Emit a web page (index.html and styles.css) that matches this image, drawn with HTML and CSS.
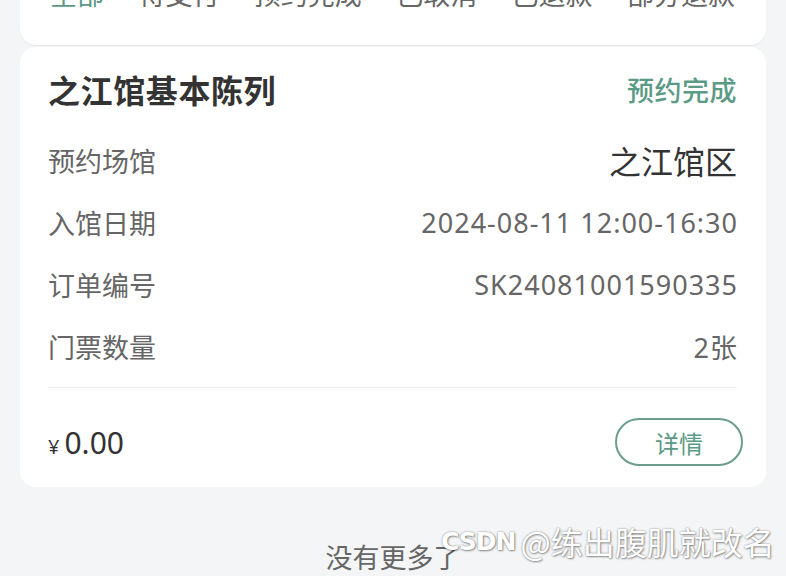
FILE: index.html
```html
<!DOCTYPE html>
<html lang="zh-CN">
<head>
<meta charset="utf-8">
<title>订单列表</title>
<link rel="stylesheet" href="styles.css">
</head>
<body>
<div class="page">
  <div class="tabs-card">
    <div class="tabs">
      <span class="tab active">全部</span>
      <span class="tab">待支付</span>
      <span class="tab">预约完成</span>
      <span class="tab">已取消</span>
      <span class="tab">已退款</span>
      <span class="tab">部分退款</span>
    </div>
  </div>

  <div class="order-card">
    <div class="order-head">
      <span class="order-title">之江馆基本陈列</span>
      <span class="order-status">预约完成</span>
    </div>
    <div class="order-row">
      <span class="row-label">预约场馆</span>
      <span class="row-value venue">之江馆区</span>
    </div>
    <div class="order-row">
      <span class="row-label">入馆日期</span>
      <span class="row-value">2024-08-11 12:00-16:30</span>
    </div>
    <div class="order-row">
      <span class="row-label">订单编号</span>
      <span class="row-value">SK24081001590335</span>
    </div>
    <div class="order-row">
      <span class="row-label">门票数量</span>
      <span class="row-value">2张</span>
    </div>
    <div class="order-divider"></div>
    <div class="order-foot">
      <span class="price"><span class="yen">¥</span>0.00</span>
      <span class="detail-btn">详情</span>
    </div>
  </div>

  <div class="no-more">没有更多了</div>
</div>
<div class="watermark"><span class="wm-logo">CSDN</span><span class="wm-text">@练出腹肌就改名</span></div>
</body>
</html>
```

FILE: styles.css
```css
html, body {
  margin: 0;
  padding: 0;
}
body {
  background: #f4f5f7;
  font-family: "Noto Sans", "Noto Sans CJK SC", sans-serif;
  color: #333;
  width: 786px;
  height: 576px;
  overflow: hidden;
  position: relative;
}
.page {
  margin-top: -46px;
  padding: 0 20px;
  display: flex;
  flex-direction: column;
  gap: 2px;
}
.tabs-card {
  background: #fff;
  border-radius: 0 0 16px 16px;
  padding: 20px 31px 31px 30px;
  box-shadow: 0 1px 1px rgba(0, 0, 0, 0.06);
}
.tabs {
  display: flex;
  justify-content: space-between;
  line-height: 40px;
  font-size: 27px;
  font-family: "Noto Sans CJK SC", sans-serif;
  color: #666;
}
.tab.active {
  color: #5b9a84;
}
.order-card {
  background: #fff;
  border-radius: 16px;
  padding: 20px 29px 21px 28px;
}
.order-head {
  display: flex;
  justify-content: space-between;
  align-items: center;
  height: 44px;
  margin-bottom: 18px;
}
.order-title {
  font-family: "Noto Sans CJK SC", sans-serif;
  font-size: 32px;
  font-weight: 700;
  color: #333;
  letter-spacing: 0.6px;
}
.order-status {
  font-family: "Noto Sans CJK SC", sans-serif;
  font-size: 27px;
  font-weight: 500;
  color: #5b9a84;
  letter-spacing: 0.5px;
}
.order-row {
  display: flex;
  justify-content: space-between;
  align-items: center;
  height: 62px;
}
.row-label {
  font-family: "Noto Sans CJK SC", sans-serif;
  font-size: 27px;
  color: #666;
}
.row-value {
  font-size: 27px;
  color: #666;
  letter-spacing: 1px;
  margin-right: -1px;
}
.row-value.venue {
  font-family: "Noto Sans CJK SC", sans-serif;
  font-size: 32px;
  color: #333;
  letter-spacing: 0;
  margin-right: 0;
}
.order-divider {
  height: 1px;
  background: #eeeeee;
  margin-top: 10px;
}
.order-foot {
  display: flex;
  justify-content: space-between;
  align-items: center;
  padding-top: 30px;
}
.price {
  font-size: 30px;
  color: #333;
  display: flex;
  align-items: baseline;
}
.yen {
  font-size: 20px;
  margin-right: 5px;
}
.detail-btn {
  box-sizing: border-box;
  width: 128px;
  height: 48px;
  margin-right: -6px;
  border: 2px solid #6a9e8b;
  border-radius: 24px;
  display: flex;
  align-items: center;
  justify-content: center;
  font-family: "Noto Sans CJK SC", sans-serif;
  font-size: 24px;
  color: #5b9a84;
}
.no-more {
  text-align: center;
  font-family: "Noto Sans CJK SC", sans-serif;
  font-size: 27px;
  color: #666;
  margin-top: 48px;
  line-height: 40px;
}
.watermark {
  position: absolute;
  left: 441px;
  top: 518px;
  display: flex;
  align-items: center;
  gap: 5px;
  color: #fff;
  text-shadow: 0 0 2px rgba(0, 0, 0, 0.45), 1px 1px 2px rgba(0, 0, 0, 0.35);
  white-space: nowrap;
}
.wm-logo {
  font-family: "DejaVu Sans", sans-serif;
  font-weight: 700;
  font-size: 25px;
  letter-spacing: -1px;
}
.wm-text {
  font-family: "Noto Sans CJK SC", sans-serif;
  font-size: 32px;
  line-height: 46px;
}
```
